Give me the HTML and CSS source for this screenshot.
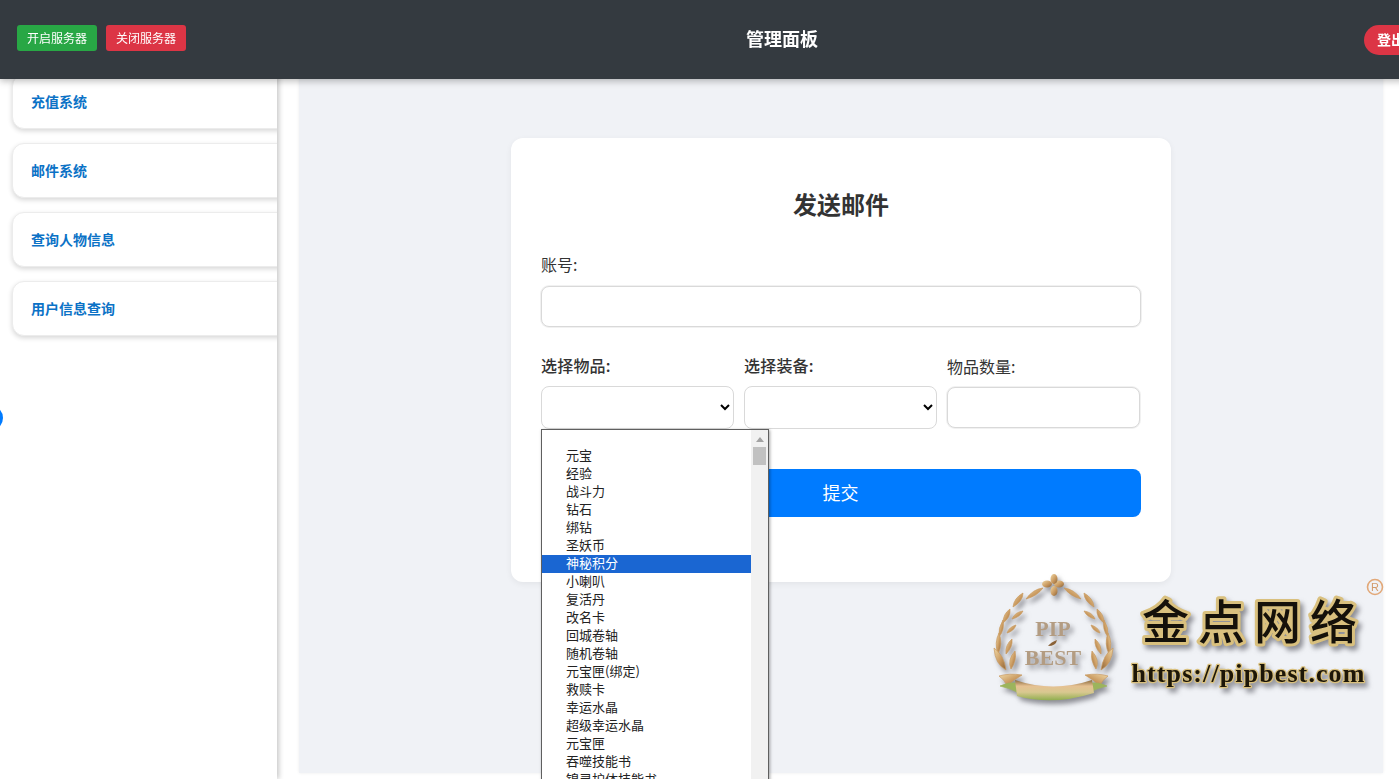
FILE: index.html
```html
<!DOCTYPE html>
<html lang="zh-CN">
<head>
<meta charset="utf-8">
<title>管理面板</title>
<link rel="stylesheet" href="styles.css">
</head>
<body>
<header class="topbar">
  <div class="server-actions">
    <button class="server-btn start" type="button">开启服务器</button>
    <button class="server-btn stop" type="button">关闭服务器</button>
  </div>
  <h1 class="topbar-title">管理面板</h1>
  <button class="logout" type="button">登出</button>
</header>

<div class="app">
  <nav class="sidebar">
    <a class="nav-card">充值系统</a>
    <a class="nav-card">邮件系统</a>
    <a class="nav-card">查询人物信息</a>
    <a class="nav-card">用户信息查询</a>
  </nav>
  <span class="sidebar-toggle"></span>
  <main class="main">
    <form class="mail-card">
      <h2 class="mail-title">发送邮件</h2>
      <label class="field-label">账号:</label>
      <input class="text-input account" type="text">
      <div class="item-row">
        <div class="item-col">
          <label class="field-label strong">选择物品:</label>
          <select class="select-input"><option></option></select>
          <div class="popup">
            <ul class="popup-list">
              <li>&nbsp;</li>
              <li>元宝</li>
              <li>经验</li>
              <li>战斗力</li>
              <li>钻石</li>
              <li>绑钻</li>
              <li>圣妖币</li>
              <li class="active">神秘积分</li>
              <li>小喇叭</li>
              <li>复活丹</li>
              <li>改名卡</li>
              <li>回城卷轴</li>
              <li>随机卷轴</li>
              <li>元宝匣(绑定)</li>
              <li>救赎卡</li>
              <li>幸运水晶</li>
              <li>超级幸运水晶</li>
              <li>元宝匣</li>
              <li>吞噬技能书</li>
              <li>锦灵护体技能书</li>
            </ul>
            <div class="popup-scroll">
              <svg class="scroll-arrow" viewBox="0 0 8 5" width="8" height="5"><path d="M4 0L8 5H0Z"/></svg>
              <span class="scroll-thumb"></span>
            </div>
          </div>
        </div>
        <div class="item-col">
          <label class="field-label strong">选择装备:</label>
          <select class="select-input"><option></option></select>
        </div>
        <div class="item-col">
          <label class="field-label">物品数量:</label>
          <input class="text-input qty" type="text">
        </div>
      </div>
      <button class="submit" type="button">提交</button>
    </form>
  </main>
</div>

<svg class="watermark" viewBox="0 0 414 140" width="414" height="140" aria-label="金点网络">
  <defs>
    <linearGradient id="leaf" x1="0" y1="0" x2="1" y2="1">
      <stop offset="0" stop-color="#f0d9a8"/>
      <stop offset="0.55" stop-color="#c9995f"/>
      <stop offset="1" stop-color="#8a6238"/>
    </linearGradient>
    <linearGradient id="ribbon" x1="0" y1="0" x2="0" y2="1">
      <stop offset="0" stop-color="#8a6a3e"/>
      <stop offset="0.3" stop-color="#e6c192"/>
      <stop offset="0.6" stop-color="#d8c890"/>
      <stop offset="1" stop-color="#8fae4e"/>
    </linearGradient>
    <g id="branch">
      <path d="M41 29Q48 19 58 18Q52 26 41 29Z"/>
      <path d="M28 37Q29 28 38 23Q38 31 28 37Z"/>
      <path d="M27 49Q30 42 38 41Q35 47 27 49Z"/>
      <path d="M18 53Q18 44 25 39Q26 47 18 53Z"/>
      <path d="M22 63Q24 57 31 55Q29 61 22 63Z"/>
      <path d="M14 67Q13 58 18 50Q20 59 14 67Z"/>
      <path d="M21 84Q20 75 27 69Q28 77 21 84Z"/>
      <path d="M13 84Q9 73 14 63Q18 74 13 84Z"/>
      <path d="M26 99Q22 90 30 81Q32 90 26 99Z"/>
      <path d="M21 100Q10 94 9 78Q19 85 21 100Z"/>
      <path d="M14 106Q24 103 37 105Q28 110 22 116Q20 110 14 106Z"/>
      <path class="logo-tail" d="M15 116Q24 112 31 113L32 122Q24 118 15 116Z"/>
    </g>
  </defs>
  <g class="logo-shadow">
    <use class="logo-branch" href="#branch" fill="url(#leaf)"/>
    <use class="logo-branch" href="#branch" fill="url(#leaf)" transform="translate(137 0) scale(-1 1)"/>
    <g fill="url(#leaf)">
      <ellipse cx="62" cy="14" rx="5" ry="3.5"/>
      <ellipse cx="74" cy="14" rx="5" ry="3.5"/>
      <ellipse cx="69" cy="9" rx="3.5" ry="5"/>
      <ellipse cx="69" cy="21" rx="3.5" ry="5"/>
    </g>
    <path d="M30 110Q68 123 107 110L109 123Q68 136 32 126Z" fill="url(#ribbon)"/>
    <text class="logo-pip" x="68" y="66">PIP</text>
    <path d="M63 76Q66 72 72 70Q71 76 63 76Z" fill="#8a6238"/>
    <text class="logo-pip" x="68" y="95">BEST</text>
  </g>
  <g class="logo-shadow">
    <text class="logo-cn" x="157" y="69">金点网络</text>
    <text class="logo-url" x="146.500" y="112">https://pipbest.com</text>
  </g>
  <circle class="logo-reg-ring" cx="390" cy="17" r="7.5"/>
  <text class="logo-reg" x="390" y="21">R</text>
</svg>
</body>
</html>
```

FILE: styles.css
```css
* { box-sizing: border-box; }

html, body {
  margin: 0;
  height: 100%;
  overflow: hidden;
  background: #fff;
  color: #333;
  font-family: "Noto Sans CJK SC", "Liberation Sans", sans-serif;
}

.topbar {
  position: fixed;
  top: 0;
  left: 0;
  z-index: 10;
  width: 1500px;
  height: 79px;
  padding-left: 17px;
  display: flex;
  align-items: center;
  background: #343a40;
  box-shadow: 0 2px 7px rgba(0, 0, 0, .28);
}

.server-actions {
  display: flex;
  gap: 9px;
  margin-bottom: 3px;
}

.server-btn {
  width: 80px;
  height: 26px;
  padding: 0;
  border: 0;
  border-radius: 3px;
  color: #fff;
  font: 12px/26px "Noto Sans CJK SC", sans-serif;
}
.server-btn.start { background: #28a745; }
.server-btn.stop { background: #dc3545; }

.topbar-title {
  margin: 0 0 4px 560px;
  color: #fff;
  font-size: 18px;
  line-height: 26px;
  font-weight: 700;
}

.logout {
  width: 70px;
  height: 30px;
  margin-left: 546px;
  padding: 0 0 2px 13px;
  border: 0;
  border-radius: 15px;
  background: #dc3545;
  color: #fff;
  text-align: left;
  font: 700 14px/28px "Noto Sans CJK SC", sans-serif;
}

.app {
  position: relative;
  display: flex;
  height: 100%;
}

.sidebar {
  flex: 0 0 277px;
  padding: 74px 0 0 12px;
  display: flex;
  flex-direction: column;
  gap: 14px;
  overflow: hidden;
  background: #fff;
  box-shadow: 2px 0 5px rgba(0, 0, 0, .22);
}

.nav-card {
  flex: 0 0 55px;
  width: 285px;
  padding-left: 18px;
  border: 1px solid #ececec;
  border-radius: 12px;
  background: #fff;
  box-shadow: 0 2px 5px rgba(0, 0, 0, .16);
  color: #0b72c6;
  font-size: 14px;
  font-weight: 700;
  line-height: 53px;
}

.sidebar-toggle {
  position: absolute;
  left: -23px;
  top: 405px;
  width: 26px;
  height: 26px;
  border-radius: 50%;
  background: #007bff;
}

.main {
  flex: 0 0 1084px;
  height: 773px;
  margin-left: 22px;
  padding-top: 138px;
  display: flex;
  justify-content: center;
  align-items: flex-start;
  background: #f0f2f6;
  box-shadow: 0 0 3px rgba(0, 0, 0, .08);
}

.mail-card {
  width: 660px;
  padding: 50px 30px 65px;
  border-radius: 12px;
  background: #fff;
  box-shadow: 0 2px 6px rgba(0, 0, 0, .06);
}

.mail-title {
  margin: 0 0 34px;
  color: #333;
  font-size: 24px;
  line-height: 32px;
  font-weight: 700;
  text-align: center;
}

.field-label {
  display: block;
  color: #333;
  font-size: 16px;
  line-height: 20px;
}
.field-label.strong {
  font-weight: 500;
  letter-spacing: .2px;
}

.text-input,
.select-input {
  display: block;
  width: 100%;
  border: 1px solid #d9d9d9;
  border-radius: 8px;
  background: #fff;
  outline: none;
}

.text-input { box-shadow: 0 0 0 1px #f1f1f1; }
.account { height: 41px; margin: 12px 0 28px; }
.qty { height: 41px; margin-top: 11px; }

.select-input {
  height: 43px;
  margin-top: 11px;
  padding: 0 8px;
  color: #000;
  font-size: 14px;
}

.item-row {
  display: grid;
  grid-template-columns: repeat(3, 193px);
  gap: 10px;
  align-items: center;
}

.item-col { position: relative; }

.popup {
  position: absolute;
  top: 74px;
  left: 0;
  z-index: 5;
  width: 228px;
  height: 400px;
  display: flex;
  overflow: hidden;
  border: 1px solid #5f5f5f;
  background: #fff;
  box-shadow: 1px 1px 3px rgba(0, 0, 0, .35);
}

.popup-list {
  flex: 1;
  margin: 0;
  padding: 0;
  list-style: none;
  color: #222;
  font-size: 13px;
  line-height: 16px;
}

.popup-list li {
  height: 18px;
  padding-left: 24px;
  white-space: nowrap;
}
.popup-list li:first-child { height: 17px; }

.popup-list .active {
  background: #1a66d2;
  color: #fff;
}

.popup-scroll {
  flex: 0 0 17px;
  padding-top: 7px;
  display: flex;
  flex-direction: column;
  align-items: center;
  background: #f1f1f1;
}

.scroll-arrow { fill: #a3a3a3; }

.scroll-thumb {
  width: 13px;
  height: 18px;
  margin-top: 5px;
  background: #c1c1c1;
}

.submit {
  display: block;
  width: 100%;
  height: 48px;
  margin-top: 40px;
  padding: 0 1px 2px 0;
  border: 0;
  border-radius: 8px;
  background: #007bff;
  color: #fff;
  font: 18px/46px "Noto Sans CJK SC", sans-serif;
}

.watermark {
  position: fixed;
  left: 985px;
  top: 570px;
  z-index: 3;
  overflow: visible;
}

.logo-shadow { filter: drop-shadow(3px 4px 2.5px rgba(60, 60, 70, .55)); }

.logo-branch {
  stroke: #c9995f;
  stroke-width: .7px;
}

.logo-tail {
  fill: #9cb45c;
  stroke: #9cb45c;
}

.logo-pip {
  fill: #b39c82;
  font-family: "Liberation Serif", serif;
  font-size: 22px;
  font-weight: 700;
  text-anchor: middle;
}

.logo-cn {
  fill: #15110a;
  stroke: #d9c07e;
  stroke-width: 6px;
  stroke-linejoin: round;
  paint-order: stroke;
  font-family: "Noto Sans CJK SC", sans-serif;
  font-size: 47px;
  font-weight: 500;
  letter-spacing: 9px;
}

.logo-url {
  fill: #1c1608;
  stroke: #d9c07e;
  stroke-width: 2.5px;
  stroke-linejoin: round;
  paint-order: stroke;
  font-family: "Liberation Serif", serif;
  font-size: 26px;
  font-weight: 700;
  letter-spacing: 1.1px;
}

.logo-reg-ring {
  fill: none;
  stroke: #e2a878;
  stroke-width: 1.6px;
}

.logo-reg {
  fill: #d39a6a;
  font-family: "Liberation Sans", sans-serif;
  font-size: 11px;
  text-anchor: middle;
}
```
